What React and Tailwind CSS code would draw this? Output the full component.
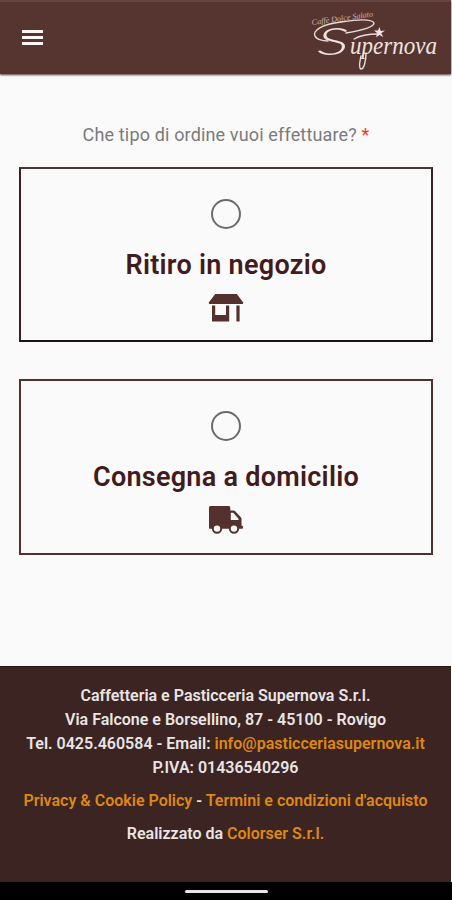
import React from 'react';

const ORDER_TYPES = [
  {
    key: 'pickup',
    label: 'Ritiro in negozio',
    icon: StoreIcon,
    box: 'h-[175px] border-t-[#4f3535] border-x-[#3a2025] border-b-[#1c1414]',
  },
  {
    key: 'delivery',
    label: 'Consegna a domicilio',
    icon: TruckIcon,
    box: 'h-[176px] border-[#4f3030]',
  },
];

function StoreIcon() {
  return (
    <svg width="36" height="30" viewBox="0 0 36 30" fill="#54302e">
      <path d="M7.2 1h21.6L35 9.2V11H1V9.2z" />
      <path d="M4 12.5h3.2v9.5h10.8v-9.5h3.2V28.5H4z" />
      <path d="M28.4 12.5h3.2v16h-3.2z" />
    </svg>
  );
}

function TruckIcon() {
  return (
    <svg width="36" height="30" viewBox="0 0 36 30">
      <path
        d="M2.5 1h18.3q1.5 0 1.5 1.5V5.6h3.2q1 0 1.7.7l5.6 6q.7.7.7 1.7v6.7h.6q.9 0 .9 1v1.1q0 .9-.9.9H1.8q-.8 0-.8-.8V2.5Q1 1 2.5 1z"
        fill="#54302e"
      />
      <path d="M22.8 7.8h2.4l5.3 6v1.2h-7.7z" fill="#fafafa" />
      <circle cx="9" cy="23.6" r="4.2" fill="#fafafa" stroke="#54302e" strokeWidth="2" />
      <circle cx="26" cy="23.6" r="4.2" fill="#fafafa" stroke="#54302e" strokeWidth="2" />
    </svg>
  );
}

function Logo() {
  return (
    <svg width="136" height="68" viewBox="306 6 136 68" fill="#efe3e1" fontStyle="italic" className="overflow-visible">
      <text x="312" y="25" fontSize="8" fontFamily="'Liberation Serif', serif" textLength="62" lengthAdjust="spacingAndGlyphs" transform="rotate(-8 312 25)" opacity="0.7">
        Caffè Dolce Salato
      </text>
      {/* flourishes around the wordmark */}
      <g fill="none" stroke="#e8dcda" strokeWidth="1.4" strokeLinecap="round">
        <path d="M346 33C358 31 374 28 374 23C372 18 354 20 341 22" />
        <path d="M341 22C322 24 312 31 315 36C316 39 322 41 328 41" />
        <path d="M354 39C361 35 370 34 378 34" />
        <path d="M366 53C366 61 364 69 361 69C358 68 360 61 361 56" />
      </g>
      <text x="317" y="54.5" fontSize="38" fontWeight="300" fontFamily="Lato, sans-serif" textLength="32" lengthAdjust="spacingAndGlyphs">
        S
      </text>
      <text x="350" y="54" fontSize="25.5" fontFamily="'Liberation Serif', serif" textLength="87" lengthAdjust="spacingAndGlyphs">
        upernova
      </text>
      <path d="M379.5 27l1.2 4 4.3-.5-3.7 2.8 2 3.9-3.6-2.3-3.7 2.4 1.3-4.1-3.3-2.6h4z" />
    </svg>
  );
}

function Header() {
  return (
    <header className="flex h-[74px] w-[451px] shrink-0 items-start justify-between border-t-2 border-t-[#654441] bg-[#563430] pl-[22px] pr-[9px] shadow-[0_1px_2px_#563430]">
      <button type="button" aria-label="Menu" className="mt-7 flex w-[21px] flex-col gap-[3px]">
        <span className="h-[3px] bg-[#fff8f6]" />
        <span className="h-[3px] bg-[#fff8f6]" />
        <span className="h-[3px] bg-[#fff8f6]" />
      </button>
      <div className="mt-1">
        <Logo />
      </div>
    </header>
  );
}

function OrderOption({ option }) {
  const Icon = option.icon;

  return (
    <label className={`flex flex-col items-center border-2 ${option.box}`}>
      <span className="mt-[30px] size-[30px] shrink-0 rounded-full border-[2.5px] border-[#6b6b6b]" />
      <span className="mt-[18px] text-[27px] leading-9 font-semibold tracking-[0.27px] whitespace-nowrap text-[#421b1c]">
        {option.label}
      </span>
      <span className="mt-[10px]">
        <Icon />
      </span>
    </label>
  );
}

function Footer() {
  return (
    <footer className="h-[216px] w-[451px] shrink-0 border-t border-[#2b1110] bg-[#3b2421] pt-[17px] text-center text-[16px] leading-6 font-semibold whitespace-nowrap text-[#e9e5e4]">
      <p>Caffetteria e Pasticceria Supernova S.r.l.</p>
      <p>Via Falcone e Borsellino, 87 - 45100 - Rovigo</p>
      <p>
        Tel. 0425.460584 - Email: <a className="text-[#de8714]">info@pasticceriasupernova.it</a>
      </p>
      <p>P.IVA: 01436540296</p>
      <p className="mt-[9px]">
        <a className="text-[#de8714]">Privacy &amp; Cookie Policy</a> - <a className="text-[#de8714]">Termini e condizioni d'acquisto</a>
      </p>
      <p className="mt-[9px]">
        Realizzato da <a className="text-[#de8714]">Colorser S.r.l.</a>
      </p>
    </footer>
  );
}

export default function App() {
  return (
    <div className="flex h-[900px] w-[452px] flex-col overflow-hidden bg-[#fafafa] font-[Roboto,sans-serif]">
      <Header />
      <main className="flex flex-1 flex-col px-[19px] pt-[49px]">
        <p className="text-center text-[18px] leading-6 tracking-[0.15px] whitespace-nowrap text-[#7a7a7a]">
          Che tipo di ordine vuoi effettuare? <span className="text-[#f8332b]">*</span>
        </p>
        <div className="mt-5 flex flex-col gap-[37px]">
          {ORDER_TYPES.map((option) => (
            <OrderOption key={option.key} option={option} />
          ))}
        </div>
      </main>
      <Footer />
      <div className="flex h-[18px] shrink-0 justify-center bg-black pt-2">
        <span className="h-[3px] w-[83px] rounded-full bg-[#e6e6e6]" />
      </div>
    </div>
  );
}
